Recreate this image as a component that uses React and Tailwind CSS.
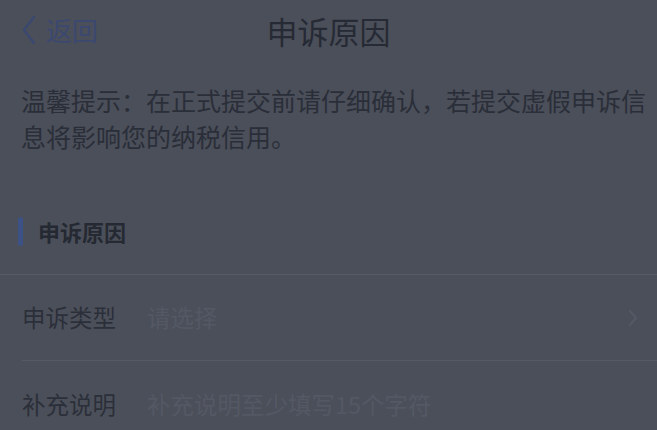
export default function App() {
  return (
    <div
      className="w-[657px] h-[430px] overflow-hidden bg-[#4b4f5a] text-[#2c303a]"
      style={{ fontFamily: '"Noto Sans CJK SC", "Noto Sans", sans-serif' }}
    >
      {/* Header */}
      <div className="relative h-[60px] flex items-center justify-center">
        <div className="absolute left-[20px] top-0 h-full flex items-center text-[#3b4870]">
          <svg width="18" height="30" viewBox="0 0 18 30" className="mr-[8px]">
            <path d="M14 2 L4 15 L14 28" fill="none" stroke="currentColor" strokeWidth="2.4" strokeLinecap="round" strokeLinejoin="round" />
          </svg>
          <span className="text-[26px] leading-none">返回</span>
        </div>
        <span className="text-[31px] leading-none text-[#262a34]">申诉原因</span>
      </div>

      {/* Notice */}
      <div className="px-[21px] pt-[22px] text-[25px] leading-[36px] text-[#2a2e38] whitespace-nowrap">
        <div>温馨提示：在正式提交前请仔细确认，若提交虚假申诉信</div>
        <div>息将影响您的纳税信用。</div>
      </div>

      {/* Section title */}
      <div className="mt-[61px] flex items-center h-[32px] pl-[18px]">
        <div className="w-[5px] h-[29px] rounded-full bg-[#3c5286]" />
        <span className="ml-[15px] text-[22px] font-bold leading-none text-[#252932]">申诉原因</span>
      </div>

      <div className="mt-[27px] border-t border-[#565a65]" />

      {/* Rows */}
      <div className="pl-[22px]">
        <div className="h-[86px] flex items-center border-b border-[#565a65]">
          <span className="w-[125px] text-[23.5px] leading-none text-[#2b2f39]">申诉类型</span>
          <span className="flex-1 text-[23.5px] leading-none text-[#545864]">请选择</span>
          <svg width="12" height="20" viewBox="0 0 12 20" className="mr-[18px] text-[#555965]">
            <path d="M3 3 L9 10 L3 17" fill="none" stroke="currentColor" strokeWidth="2" strokeLinecap="round" strokeLinejoin="round" />
          </svg>
        </div>
        <div className="h-[88px] flex items-center">
          <span className="w-[125px] text-[23.5px] leading-none text-[#2b2f39]">补充说明</span>
          <span className="flex-1 text-[23.5px] leading-none text-[#545864]">补充说明至少填写15个字符</span>
        </div>
      </div>
    </div>
  );
}
